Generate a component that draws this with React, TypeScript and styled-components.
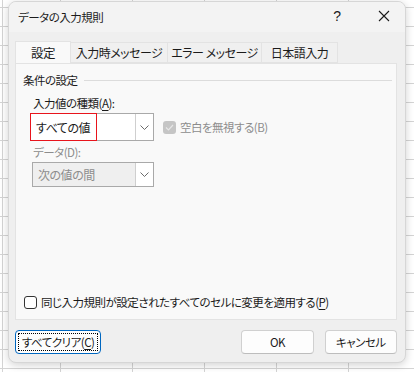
import styled, { createGlobalStyle } from 'styled-components';

const GlobalStyle = createGlobalStyle`
  html, body {
    margin: 0;
    padding: 0;
  }
  body {
    width: 414px;
    height: 372px;
    overflow: hidden;
    font-family: "Noto Sans CJK JP", "Noto Sans", sans-serif;
    font-feature-settings: "palt";
    font-size: 11.5px;
    letter-spacing: -0.5px;
    color: #1b1b1b;
    white-space: nowrap;
    background-color: #ffffff;
    background-image:
      linear-gradient(to bottom, #d4d4d4 1px, transparent 1px),
      linear-gradient(to right, #d4d4d4 1px, transparent 1px),
      linear-gradient(to right, #d4d4d4 1px, transparent 1px);
    background-size: 100% 19px, 72px 100%, 1px 100%;
    background-position: 0 7px, 60px 0, 2px 0;
    background-repeat: repeat, repeat-x, no-repeat;
  }
`;

const Dialog = styled.div`
  margin: 1px 0 0 8px;
  width: 398px;
  height: 362px;
  box-sizing: border-box;
  background: #efefef;
  border: 1px solid #d6d6d6;
  border-radius: 8px;
  box-shadow: 0 2px 8px rgba(0, 0, 0, 0.18);
  overflow: hidden;
  display: flex;
  flex-direction: column;
`;

const TitleBar = styled.div`
  height: 30px;
  background: #f3f3f3;
  display: flex;
  align-items: center;
  padding-left: 9px;
  flex-shrink: 0;
`;

const Title = styled.div`
  flex: 1;
  line-height: 16px;
  padding-bottom: 1px;
`;

const HelpButton = styled.div`
  width: 40px;
  text-align: center;
  font-family: "Liberation Sans", sans-serif;
  font-size: 14px;
  margin-right: 6px;
  padding-bottom: 2px;
`;

const CloseButton = styled.div`
  width: 42px;
  display: flex;
  justify-content: center;
  padding-bottom: 2px;
`;

const Body = styled.div`
  flex: 1;
  display: flex;
  flex-direction: column;
  padding: 9px 8px 8px 6px;
`;

const TabRow = styled.div`
  display: flex;
  align-items: flex-end;
  height: 22px;
`;

const Tab = styled.div<{ $w: number; $active?: boolean }>`
  width: ${(p) => p.$w}px;
  box-sizing: border-box;
  height: ${(p) => (p.$active ? 22 : 21)}px;
  display: flex;
  align-items: center;
  justify-content: center;
  background: ${(p) => (p.$active ? '#f9f9f9' : '#f0f0f0')};
  border: 1px solid #e3e3e3;
  border-bottom: ${(p) => (p.$active ? 'none' : '1px solid #e3e3e3')};
  margin-right: -1px;
  font-size: ${(p) => (p.$active ? 12.5 : 12)}px;
  padding-bottom: 1px;
  position: relative;
  z-index: ${(p) => (p.$active ? 1 : 0)};
`;

const Panel = styled.div`
  flex: 1;
  background: #f9f9f9;
  border: 1px solid #e3e3e3;
  display: flex;
  flex-direction: column;
  padding: 8px 4px 9px 7px;
`;

const GroupLabel = styled.div`
  display: flex;
  align-items: center;
  line-height: 16px;
  &::after {
    content: '';
    flex: 1;
    height: 1px;
    background: #dcdcdc;
    margin-left: 6px;
    margin-top: 1px;
  }
`;

const Field = styled.div`
  padding-left: 7px;
  display: flex;
  flex-direction: column;
`;

const FieldLabel = styled.div<{ $disabled?: boolean; $top: number }>`
  line-height: 16px;
  margin: ${(p) => p.$top}px 0 2px 3px;
  color: ${(p) => (p.$disabled ? '#8d8d8d' : '#1b1b1b')};
`;

const FieldRow = styled.div`
  display: flex;
  align-items: center;
  gap: 9px;
`;

const Select = styled.div<{ $disabled?: boolean; $h: number; $w: number; $ml?: number }>`
  width: ${(p) => p.$w}px;
  height: ${(p) => p.$h}px;
  margin-left: ${(p) => p.$ml || 0}px;
  box-sizing: border-box;
  border: 1px solid #a9a9a9;
  background: ${(p) => (p.$disabled ? '#efefef' : '#ffffff')};
  display: flex;
  position: relative;
`;

const SelectValue = styled.div<{ $disabled?: boolean }>`
  flex: 1;
  display: flex;
  align-items: center;
  padding-left: 5px;
  font-size: 12px;
  color: ${(p) => (p.$disabled ? '#8d8d8d' : '#1b1b1b')};
`;

const Highlight = styled.div`
  position: absolute;
  left: -1px;
  top: -1px;
  width: 67px;
  bottom: -1px;
  border: 1px solid #e8141c;
  box-sizing: border-box;
`;

const Arrow = styled.div`
  width: 17px;
  border-left: 1px solid #cfcfcf;
  background: #ffffff;
  display: flex;
  align-items: center;
  justify-content: center;
`;

const Check = styled.div<{ $disabled?: boolean }>`
  display: flex;
  align-items: center;
  gap: 4px;
  color: ${(p) => (p.$disabled ? '#8d8d8d' : '#1b1b1b')};
  line-height: 16px;
`;

const Box = styled.div<{ $checked?: boolean }>`
  width: 13px;
  height: 13px;
  box-sizing: border-box;
  border-radius: 3px;
  background: ${(p) => (p.$checked ? '#c5c5c5' : '#ffffff')};
  border: ${(p) => (p.$checked ? 'none' : '1px solid #333333')};
  display: flex;
  align-items: center;
  justify-content: center;
`;

const BottomCheck = styled.div`
  margin-top: auto;
  padding-left: 1px;
`;

const Footer = styled.div`
  display: flex;
  align-items: center;
  margin-top: 10px;
`;

const Button = styled.div<{ $w: number; $primary?: boolean; $ml?: number }>`
  width: ${(p) => p.$w}px;
  height: 24px;
  box-sizing: border-box;
  margin-left: ${(p) => p.$ml || 0}px;
  background: #fdfdfd;
  border: 1px solid ${(p) => (p.$primary ? '#0067c0' : '#d0d0d0')};
  border-bottom-color: ${(p) => (p.$primary ? '#0067c0' : '#bdbdbd')};
  border-radius: 4px;
  display: flex;
  align-items: center;
  justify-content: center;
  padding: 2px;
`;

const Focus = styled.div`
  width: 100%;
  height: 100%;
  box-sizing: border-box;
  border: 1px dotted #000000;
  display: flex;
  align-items: center;
  justify-content: center;
  padding-bottom: 1px;
`;

const Key = styled.span`
  text-decoration: underline;
  text-underline-offset: 2px;
`;

const Chevron = () => (
  <svg width="9" height="5" viewBox="0 0 9 5">
    <path d="M0.5 0.5 L4.5 4.5 L8.5 0.5" fill="none" stroke="#6b6b6b" strokeWidth="1" />
  </svg>
);

const App = () => (
  <>
    <GlobalStyle />
    <Dialog>
      <TitleBar>
        <Title>データの入力規則</Title>
        <HelpButton>?</HelpButton>
        <CloseButton>
          <svg width="12" height="12" viewBox="0 0 12 12">
            <path d="M1 1 L11 11 M11 1 L1 11" stroke="#1b1b1b" strokeWidth="1.1" />
          </svg>
        </CloseButton>
      </TitleBar>
      <Body>
        <TabRow>
          <Tab $w={56} $active>設定</Tab>
          <Tab $w={98}>入力時メッセージ</Tab>
          <Tab $w={95}>エラー メッセージ</Tab>
          <Tab $w={77}>日本語入力</Tab>
        </TabRow>
        <Panel>
          <GroupLabel>条件の設定</GroupLabel>
          <Field>
            <FieldLabel $top={7}>
              入力値の種類(<Key>A</Key>):
            </FieldLabel>
            <FieldRow>
              <Select $w={124} $h={28}>
                <Highlight />
                <SelectValue>すべての値</SelectValue>
                <Arrow>
                  <Chevron />
                </Arrow>
              </Select>
              <Check $disabled>
                <Box $checked>
                  <svg width="9" height="7" viewBox="0 0 9 7">
                    <path d="M1 3.5 L3.5 6 L8 1" fill="none" stroke="#e6e6e6" strokeWidth="1.2" />
                  </svg>
                </Box>
                <span>空白を無視する(B)</span>
              </Check>
            </FieldRow>
            <FieldLabel $top={3} $disabled>
              データ(D):
            </FieldLabel>
            <Select $w={122} $h={25} $ml={2} $disabled>
              <SelectValue $disabled>次の値の間</SelectValue>
              <Arrow>
                <Chevron />
              </Arrow>
            </Select>
          </Field>
          <BottomCheck>
            <Check>
              <Box />
              <span>
                同じ入力規則が設定されたすべてのセルに変更を適用する(<Key>P</Key>)
              </span>
            </Check>
          </BottomCheck>
        </Panel>
        <Footer>
          <Button $w={87} $primary>
            <Focus>
              <span>
                すべてクリア(<Key>C</Key>)
              </span>
            </Focus>
          </Button>
          <Button $w={73} $ml={140}>OK</Button>
          <Button $w={73} $ml={11}>キャンセル</Button>
        </Footer>
      </Body>
    </Dialog>
  </>
);

export default App;
